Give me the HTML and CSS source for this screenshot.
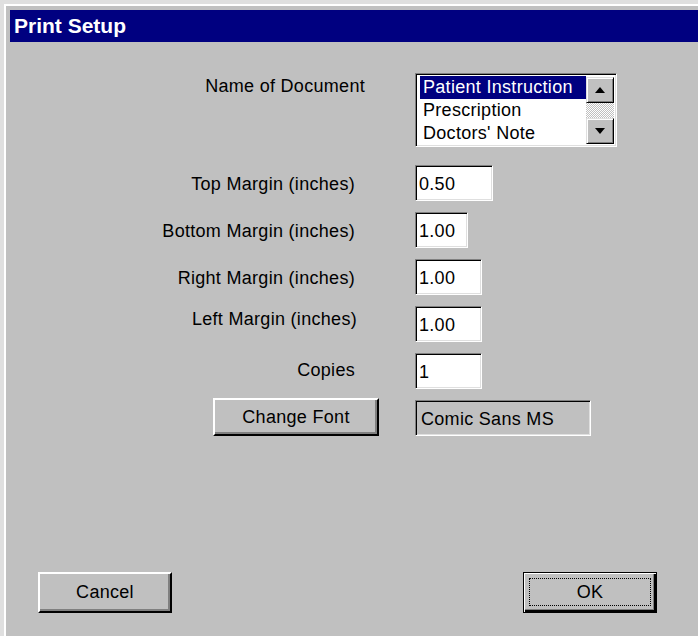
FILE: index.html
```html
<!DOCTYPE html>
<html lang="en">
<head>
<meta charset="utf-8">
<title>Print Setup</title>
<link rel="stylesheet" href="styles.css">
</head>
<body>
<div class="window">
  <div class="frame">
    <div class="titlebar">Print Setup</div>
    <div class="client">
      <div class="form">
        <div class="label lbl-name">Name of Document</div>
        <div class="listbox">
          <ul class="items">
            <li class="item selected">Patient Instruction</li>
            <li class="item">Prescription</li>
            <li class="item">Doctors' Note</li>
          </ul>
          <div class="scrollbar">
            <div class="sb-btn">
              <svg width="10" height="6" viewBox="0 0 10 6"><path d="M5 0 L10 6 L0 6 Z" fill="#000"/></svg>
            </div>
            <div class="sb-track"></div>
            <div class="sb-btn">
              <svg width="10" height="6" viewBox="0 0 10 6"><path d="M0 0 L10 0 L5 6 Z" fill="#000"/></svg>
            </div>
          </div>
        </div>

        <div class="label">Top Margin (inches)</div>
        <div class="field w-wide">0.50</div>

        <div class="label">Bottom Margin (inches)</div>
        <div class="field w-narrow">1.00</div>

        <div class="label">Right Margin (inches)</div>
        <div class="field w-mid">1.00</div>

        <div class="label lbl-left">Left Margin (inches)</div>
        <div class="field w-mid">1.00</div>

        <div class="label lbl-copies">Copies</div>
        <div class="field w-mid">1</div>

        <div class="btn-cell"><button class="btn btn-font">Change Font</button></div>
        <div class="field readonly w-font">Comic Sans MS</div>
      </div>

      <div class="footer">
        <button class="btn">Cancel</button>
        <button class="btn btn-default"><span class="focus">OK</span></button>
      </div>
    </div>
  </div>
</div>
</body>
</html>
```
FILE: styles.css
```css
* { box-sizing: border-box; }

html, body {
  margin: 0;
  padding: 0;
  background: #c0c0c0;
}

body {
  font-family: "Liberation Sans", Arial, sans-serif;
  font-size: 18px;
  letter-spacing: 0.3px;
  color: #000;
}

/* window frame: light outer edge, white highlight, then face */
.window {
  height: 636px;
  display: flex;
  flex-direction: column;
  border-top: 4px solid #dfdfdf;
  border-left: 4px solid #dfdfdf;
}

.frame {
  flex: 1;
  display: flex;
  flex-direction: column;
  border-top: 2px solid #fff;
  border-left: 2px solid #fff;
  padding: 4px 0 0 4px;
}

.titlebar {
  height: 32px;
  line-height: 32px;
  background: #000080;
  color: #fff;
  font-weight: bold;
  font-size: 21px;
  letter-spacing: 0;
  padding-left: 4px;
}

.client {
  flex: 1;
  display: flex;
  flex-direction: column;
}

/* label / control grid */
.form {
  display: grid;
  grid-template-columns: 369px auto;
  column-gap: 36px;
  row-gap: 11px;
  margin-top: 31px;
  align-items: start;
}

.label {
  text-align: right;
  padding-right: 24px;
  padding-top: 9px;
  line-height: 21px;
  white-space: nowrap;
}

.lbl-name { padding-top: 3px; padding-right: 14px; }
.lbl-left { padding-top: 3px; padding-right: 22px; }
.lbl-copies { padding-top: 7px; }

/* sunken 3D edge shared by edit fields and the list */
.field,
.listbox {
  border: 1px solid;
  border-color: #808080 #fff #fff #808080;
  box-shadow: inset 1px 1px #000, inset -1px -1px #dfdfdf;
}

.field {
  height: 36px;
  background: #fff;
  line-height: 34px;
  padding: 1px 3px 0 3px;
  white-space: nowrap;
}

.field.readonly { background: #c0c0c0; padding-left: 5px; }

.w-wide { width: 78px; }
.w-narrow { width: 53px; }
.w-mid { width: 67px; }
.w-font { width: 176px; }

.listbox {
  width: 202px;
  height: 74px;
  margin-bottom: 7px;
  background: #fff;
  display: flex;
  padding: 2px 2px 2px 4px;
  overflow: hidden;
}

.items {
  list-style: none;
  margin: 0;
  padding: 0;
  flex: 1;
  min-width: 0;
}

.item {
  line-height: 23px;
  height: 23px;
  padding-left: 3px;
  white-space: nowrap;
}

.item.selected {
  background: #000080;
  color: #fff;
}

.scrollbar {
  width: 28px;
  display: flex;
  flex-direction: column;
  margin-top: 1px;
}

.sb-btn {
  height: 26px;
  background: #c0c0c0;
  border: 1px solid;
  border-color: #dfdfdf #000 #000 #dfdfdf;
  box-shadow: inset 1px 1px #fff, inset -1px -1px #808080;
  display: flex;
  align-items: center;
  justify-content: center;
}

.sb-btn svg { display: block; }

.sb-track {
  flex: 1;
  background: repeating-conic-gradient(#fff 0 25%, #c0c0c0 0 50%) 0 0 / 2px 2px;
}

/* push buttons */
.btn {
  font: inherit;
  letter-spacing: inherit;
  color: #000;
  background: #c0c0c0;
  width: 134px;
  height: 41px;
  padding: 0;
  border: 2px solid;
  border-color: #fff #000 #000 #fff;
  box-shadow: inset -2px -2px #808080;
  display: flex;
  align-items: center;
  justify-content: center;
}

.btn-cell {
  display: flex;
  justify-content: flex-end;
}

.btn-font {
  width: 166px;
  height: 38px;
  margin-top: -2px;
}

.btn-default {
  border: 1px solid #000;
  box-shadow: inset 1px 1px #fff, inset -2px -2px #000, inset -3px -3px #808080;
  padding: 5px 5px 6px 5px;
}

.btn-default .focus {
  flex: 1;
  align-self: stretch;
  display: flex;
  align-items: center;
  justify-content: center;
  border: 1px dotted #000;
}

.footer {
  margin-top: auto;
  display: flex;
  justify-content: space-between;
  padding: 0 41px 23px 28px;
}
```
